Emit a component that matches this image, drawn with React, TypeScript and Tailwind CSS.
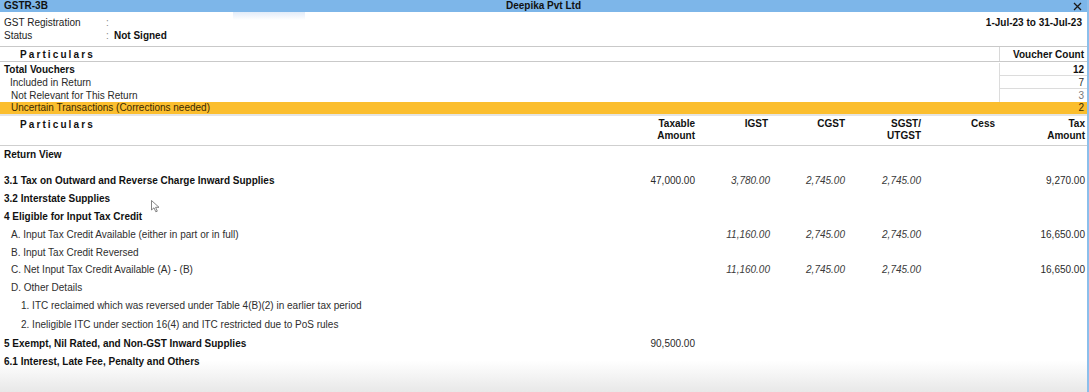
import React from "react";

const font = { fontFamily: '"Liberation Sans", Arial, sans-serif' };

type Row = {
  label: string;
  bold?: boolean;
  indent?: number;
  taxable?: string;
  igst?: string;
  cgst?: string;
  sgst?: string;
  tax?: string;
  h: string;
};

const rows: Row[] = [
  { label: "3.1 Tax on Outward and Reverse Charge Inward Supplies", bold: true, taxable: "47,000.00", igst: "3,780.00", cgst: "2,745.00", sgst: "2,745.00", tax: "9,270.00", h: "h-[17px]" },
  { label: "3.2 Interstate Supplies", bold: true, h: "h-[18px]" },
  { label: "4 Eligible for Input Tax Credit", bold: true, h: "h-[18px]" },
  { label: "A. Input Tax Credit Available (either in part or in full)", indent: 1, igst: "11,160.00", cgst: "2,745.00", sgst: "2,745.00", tax: "16,650.00", h: "h-[18px]" },
  { label: "B. Input Tax Credit Reversed", indent: 1, h: "h-[18px]" },
  { label: "C. Net Input Tax Credit Available (A) - (B)", indent: 1, igst: "11,160.00", cgst: "2,745.00", sgst: "2,745.00", tax: "16,650.00", h: "h-[17px]" },
  { label: "D. Other Details", indent: 1, h: "h-[18px]" },
  { label: "1. ITC reclaimed which was reversed under Table 4(B)(2) in earlier tax period", indent: 2, h: "h-[18px]" },
  { label: "2. Ineligible ITC under section 16(4) and ITC restricted due to PoS rules", indent: 2, h: "h-[20px]" },
  { label: "5 Exempt, Nil Rated, and Non-GST Inward Supplies", bold: true, taxable: "90,500.00", h: "h-[18px]" },
  { label: "6.1 Interest, Late Fee, Penalty and Others", bold: true, h: "h-[18px]" },
];

const gridCols = "grid grid-cols-[616px_75px_75px_75px_76px_74px_90px]";

function TableRow({ r }: { r: Row }) {
  const pl = r.indent === 2 ? "pl-[17px]" : r.indent === 1 ? "pl-[7px]" : "pl-0";
  return (
    <div className={`${gridCols} ${r.h} items-center`}>
      <div className={`${pl} ${r.bold ? "font-bold text-[#111]" : "text-[#2e2e2e]"} whitespace-nowrap`}>{r.label}</div>
      <div className="text-right text-[#2a2a2a]">{r.taxable}</div>
      <div className="text-right italic text-[#3a3a3a]">{r.igst}</div>
      <div className="text-right italic text-[#3a3a3a]">{r.cgst}</div>
      <div className="text-right italic text-[#3a3a3a]">{r.sgst}</div>
      <div className="text-right"></div>
      <div className="text-right text-[#2a2a2a]">{r.tax}</div>
    </div>
  );
}

export default function App() {
  return (
    <div
      style={font}
      className="relative w-[1089px] h-[392px] overflow-hidden bg-gradient-to-b from-white from-[92%] to-[#e8e8e8] text-[10px] leading-[13px] text-[#111] border-r-[2px] border-[#8cbfeb]"
    >
      {/* Title bar */}
      <div className="flex items-center justify-between h-[12px] bg-[#7db6e9] px-[4px]">
        <div className="w-[200px] font-bold text-[10px] leading-[12px]">GSTR-3B</div>
        <div className="font-bold text-[10px] leading-[12px] text-[#111]">Deepika Pvt Ltd</div>
        <div className="w-[200px] flex justify-end">
          <svg width="9" height="9" viewBox="0 0 9 9" className="mr-[1px]">
            <path d="M1 1 L8 8 M8 1 L1 8" stroke="#1a1a1a" strokeWidth="1.3" />
          </svg>
        </div>
      </div>

      {/* Info area */}
      <div className="relative flex justify-between pl-[4px] pr-[5px] pt-[4px] h-[34px]">
        <div>
          <div className="flex">
            <div className="w-[102px] text-[#222]">GST Registration</div>
            <div className="text-[#888]">:</div>
          </div>
          <div className="flex">
            <div className="w-[102px] text-[#222]">Status</div>
            <div className="text-[#888] w-[8px]">:</div>
            <div className="font-bold">Not Signed</div>
          </div>
        </div>
        <div className="font-bold">1-Jul-23 to 31-Jul-23</div>
        <div className="absolute left-[233px] top-0 w-[72px] h-[8px] bg-gradient-to-b from-[#e2ecf9] to-white"></div>
      </div>

      {/* Voucher header */}
      <div className="flex h-[16px] border-t border-b border-[#c9c9c9]">
        <div className="flex-1 pl-[20px] font-bold tracking-[2.1px] leading-[15px]">Particulars</div>
        <div className="w-[88px] border-l border-[#d8d8d8] text-right pr-[3px] font-bold leading-[15px]">Voucher Count</div>
      </div>

      {/* Voucher rows */}
      <div className="mt-[1px]">
        <div className="flex h-[13px]">
          <div className="flex-1 pl-[4px] font-bold">Total Vouchers</div>
          <div className="w-[88px] border-l border-b border-[#dcdcdc] text-right pr-[3px] font-bold">12</div>
        </div>
        <div className="flex h-[13px]">
          <div className="flex-1 pl-[10px] text-[#2a2a2a]">Included in Return</div>
          <div className="w-[88px] border-l border-b border-[#dcdcdc] text-right pr-[3px] text-[#2a2a2a]">7</div>
        </div>
        <div className="flex h-[13px]">
          <div className="flex-1 pl-[11px] text-[#2a2a2a]">Not Relevant for This Return</div>
          <div className="w-[88px] border-l border-[#dcdcdc] text-right pr-[3px] text-[#777]">3</div>
        </div>
        <div className="flex h-[12px] bg-[#fbbe2e]">
          <div className="flex-1 pl-[11px] text-[#3a2a00] leading-[12px]">Uncertain Transactions (Corrections needed)</div>
          <div className="w-[88px] text-right pr-[3px] text-[#3a2a00] leading-[12px]">2</div>
        </div>
      </div>

      <div className="h-[2px] bg-[#e4e4e4]"></div>

      {/* Main table header */}
      <div className={`${gridCols} px-[4px] pt-[2px] h-[30px] border-b border-[#cfcfcf] font-bold leading-[12px]`}>
        <div className="pl-[16px] tracking-[2.1px] pt-[1px]">Particulars</div>
        <div className="text-right">Taxable<br />Amount</div>
        <div className="text-right pr-[2px]">IGST</div>
        <div className="text-right">CGST</div>
        <div className="text-right">SGST/<br />UTGST</div>
        <div className="text-right">Cess</div>
        <div className="text-right">Tax<br />Amount</div>
      </div>

      {/* Body */}
      <div className="px-[4px]">
        <div className="h-[17px] flex items-center font-bold">Return View</div>
        <div className="h-[9px]"></div>
        {rows.map((r, i) => (
          <TableRow key={i} r={r} />
        ))}
      </div>

      {/* mouse cursor */}
      <svg className="absolute left-[151px] top-[200px]" width="9" height="13" viewBox="0 0 9 13">
        <path d="M0.5 0.5 L0.5 10 L3 7.8 L4.8 11.8 L6.3 11.2 L4.6 7.3 L8 7.3 Z" fill="white" stroke="#666" strokeWidth="0.8" />
      </svg>
    </div>
  );
}
